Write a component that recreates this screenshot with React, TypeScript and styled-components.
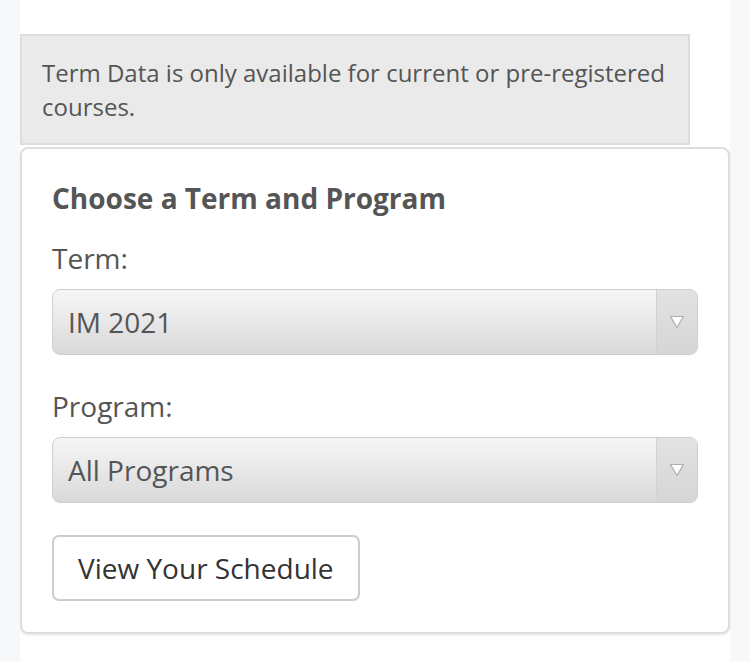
import styled, { createGlobalStyle } from "styled-components";

const GlobalStyle = createGlobalStyle`
  html, body {
    margin: 0;
    padding: 0;
    background: #f7f8fa;
    font-family: "Open Sans", "Liberation Sans", sans-serif;
  }
`;

const Column = styled.div`
  width: 710px;
  min-height: 662px;
  margin: 0 20px;
  padding-top: 34px;
  background: #fff;
  box-sizing: border-box;
`;

const Notice = styled.div`
  width: 670px;
  box-sizing: border-box;
  padding: 20px 20px 19px;
  border: 2px solid #dddddd;
  background: #eaeaea;
  color: #555;
  font-size: 24px;
  line-height: 34px;
`;

const Card = styled.div`
  margin-top: 2px;
  padding: 30px 30px 31px;
  border: 2px solid #dddddd;
  border-radius: 8px;
  background: #fff;
  box-shadow: 0 2px 2px rgba(0, 0, 0, 0.06);
`;

const Heading = styled.h2`
  margin: 0 0 24px;
  font-size: 28px;
  line-height: 38px;
  font-weight: 700;
  color: #555;
`;

const Field = styled.div`
  display: flex;
  flex-direction: column;
  gap: 14px;
  margin-bottom: 34px;

  &:last-of-type {
    margin-bottom: 32px;
  }
`;

const Label = styled.label`
  font-size: 28px;
  line-height: 34px;
  color: #555;
`;

const SelectBox = styled.div`
  display: flex;
  height: 66px;
  box-sizing: border-box;
  border: 1px solid #cfcfcf;
  border-radius: 8px;
  overflow: hidden;
  background: linear-gradient(#f6f6f6, #d9d9d9);
  color: #555;
`;

const SelectValue = styled.span`
  flex: 1;
  display: flex;
  align-items: center;
  padding-left: 15px;
  font-size: 28px;
`;

const SelectArrow = styled.span`
  width: 40px;
  display: flex;
  align-items: center;
  justify-content: center;
  border-left: 1px solid #d2d2d2;
  background: linear-gradient(#e2e2e2, #d6d6d6);
`;

const Button = styled.button`
  display: block;
  height: 66px;
  padding: 0 24px;
  border: 2px solid #cccccc;
  border-radius: 7px;
  background: #fff;
  color: #333;
  font-family: inherit;
  font-size: 28px;
`;

const Arrow = () => (
  <svg width="16" height="14" viewBox="0 0 16 14">
    <polygon points="1.5,1.5 14.5,1.5 8,12.5" fill="#fff" stroke="#aeaeae" strokeWidth="1.2" strokeLinejoin="round" />
  </svg>
);

const Select = ({ value }: { value: string }) => (
  <SelectBox>
    <SelectValue>{value}</SelectValue>
    <SelectArrow>
      <Arrow />
    </SelectArrow>
  </SelectBox>
);

export default function App() {
  return (
    <>
      <GlobalStyle />
      <Column>
        <Notice>Term Data is only available for current or pre-registered courses.</Notice>
        <Card>
          <Heading>Choose a Term and Program</Heading>
          <Field>
            <Label>Term:</Label>
            <Select value="IM 2021" />
          </Field>
          <Field>
            <Label>Program:</Label>
            <Select value="All Programs" />
          </Field>
          <Button>View Your Schedule</Button>
        </Card>
      </Column>
    </>
  );
}
